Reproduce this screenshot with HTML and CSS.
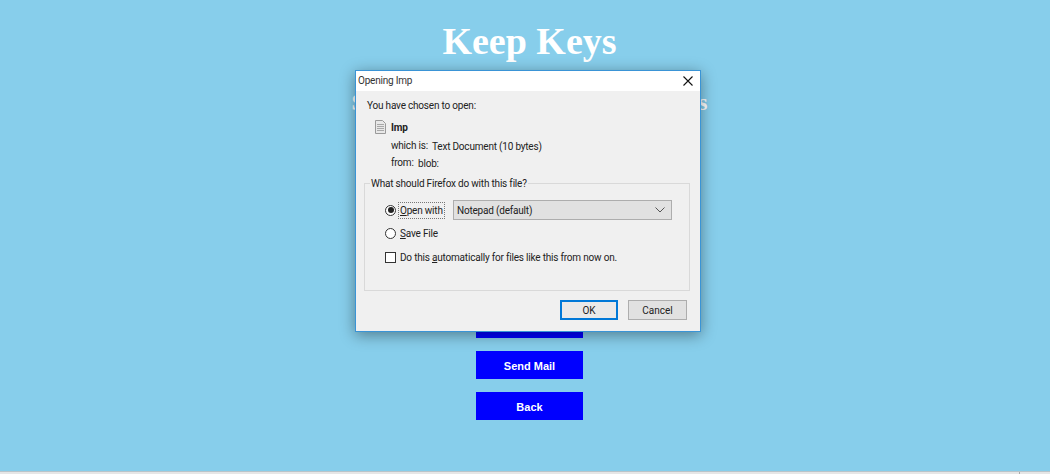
FILE: index.html
```html
<!DOCTYPE html>
<html lang="en">
<head>
    <meta charset="UTF-8">
    <title>Keep Keys</title>
    <link rel="stylesheet" href="styles.css">
</head>
<body>
    <main class="page">
        <h1>Keep Keys</h1>
        <h2>Store And Manage All Of Your Keys</h2>
        <div class="actions">
            <button class="action" type="button">Download</button>
            <button class="action" type="button">Send Mail</button>
            <button class="action" type="button">Back</button>
        </div>
    </main>
    <div class="status-bar"><span class="status-cell"></span></div>

    <section class="dialog">
        <header class="dialog-title">
            <span>Opening Imp</span>
            <svg class="close" width="10" height="10" viewBox="0 0 10 10">
                <path d="M0.5 0.5L9.5 9.5M9.5 0.5L0.5 9.5" stroke="#111" stroke-width="1.1" fill="none"/>
            </svg>
        </header>
        <div class="dialog-body">
            <p class="intro">You have chosen to open:</p>
            <div class="file-row">
                <svg class="file-icon" width="11" height="14" viewBox="0 0 11 14">
                    <path d="M0.5 0.5H7.5L10.5 3.5V13.5H0.5Z" fill="#e8e8e8" stroke="#9a9a9a"/>
                    <path d="M2 4.5H9M2 6.5H9M2 8.5H9M2 10.5H9" stroke="#a8a8a8"/>
                </svg>
                <strong>Imp</strong>
            </div>
            <div class="meta meta-type"><span class="meta-key">which is:</span><span class="meta-value">Text Document (10 bytes)</span></div>
            <div class="meta meta-from"><span class="meta-key">from:</span><span class="meta-value">blob:</span></div>

            <div class="group">
                <span class="legend">What should Firefox do with this file?</span>
                <div class="open-row">
                    <span class="radio checked"></span>
                    <span class="focus-label"><u>O</u>pen with</span>
                    <div class="select">
                        <span>Notepad (default)</span>
                        <svg width="10" height="6" viewBox="0 0 10 6">
                            <path d="M0.5 0.5L5 5L9.5 0.5" stroke="#555" fill="none"/>
                        </svg>
                    </div>
                </div>
                <div class="option-row">
                    <span class="radio"></span>
                    <span><u>S</u>ave File</span>
                </div>
                <div class="option-row auto-row">
                    <span class="checkbox"></span>
                    <span>Do this <u>a</u>utomatically for files like this from now on.</span>
                </div>
            </div>

            <div class="dialog-buttons">
                <button class="dlg-btn primary" type="button">OK</button>
                <button class="dlg-btn" type="button">Cancel</button>
            </div>
        </div>
    </section>
</body>
</html>
```

FILE: styles.css
```css
html, body {
    height: 100%;
}
body {
    margin: 0;
    background: #87ceeb;
    display: flex;
    flex-direction: column;
    overflow: hidden;
    font-family: "Roboto", "Lato", sans-serif;
}
.page {
    flex: 1;
    text-align: center;
    font-family: "Liberation Serif", serif;
    color: #fff;
    margin-right: -9px;
}
h1 {
    margin: 19px 0 0 0;
    font-size: 38px;
    line-height: 44px;
    font-weight: bold;
}
h2 {
    margin: 26px 0 0 0;
    font-size: 23px;
    line-height: 28px;
    font-weight: bold;
    white-space: nowrap;
}
.actions {
    display: flex;
    flex-direction: column;
    align-items: center;
    gap: 13px;
    margin-top: 193px;
}
.action {
    width: 107px;
    height: 28px;
    padding: 1px 0 0 0;
    border: 0;
    background: #0000ff;
    color: #fff;
    font-family: "Liberation Sans", sans-serif;
    font-size: 11px;
    font-weight: bold;
}
.status-bar {
    height: 2px;
    background: #e6e6e6;
    border-top: 1px solid #b9c4c9;
    display: flex;
    justify-content: flex-end;
}
.status-cell {
    width: 30px;
    border-left: 1px solid #aaa;
}

/* file dialog sits over the page */
.dialog {
    position: absolute;
    left: 355px;
    top: 70px;
    width: 346px;
    height: 262px;
    box-sizing: border-box;
    border: 1px solid #3a94d6;
    background: #f0f0f0;
    box-shadow: 0 3px 14px rgba(0, 0, 0, 0.4);
    display: flex;
    flex-direction: column;
    font-size: 10px;
    letter-spacing: -0.2px;
    color: #222;
}
.dialog-title {
    height: 20px;
    flex: none;
    box-sizing: border-box;
    background: #fff;
    display: flex;
    align-items: center;
    justify-content: space-between;
    padding: 0 7px 1px 2px;
    color: #333;
}
.dialog-body {
    flex: 1;
    padding: 8px 10px 0 10px;
    display: flex;
    flex-direction: column;
}
.intro {
    margin: 0 0 0 1px;
    line-height: 14px;
}
.file-row {
    display: flex;
    align-items: center;
    gap: 5px;
    margin: 7px 0 0 9px;
    height: 14px;
}
.file-row strong {
    font-weight: bold;
}
.meta {
    display: flex;
    margin-left: 25px;
    line-height: 14px;
    white-space: nowrap;
}
.meta-type {
    margin-top: 5px;
}
.meta-type .meta-key {
    width: 41px;
}
.meta-from {
    margin-top: 2px;
}
.meta-from .meta-key {
    width: 27px;
}
.meta-value {
    padding-top: 1px;
}
.group {
    position: relative;
    height: 108px;
    box-sizing: border-box;
    margin: 12px 0 0 -2px;
    border: 1px solid #d9d9d9;
    padding: 16px 16px 0 20px;
}
.legend {
    position: absolute;
    left: 5px;
    top: -7px;
    padding: 0 1px;
    line-height: 14px;
    background: #f0f0f0;
}
.open-row {
    display: flex;
    align-items: center;
    height: 20px;
}
.option-row {
    display: flex;
    align-items: center;
    gap: 4px;
    margin-top: 6px;
    height: 14px;
}
.auto-row {
    margin-top: 10px;
}
.radio {
    width: 9px;
    height: 9px;
    flex: none;
    border: 1px solid #333;
    border-radius: 50%;
    background: #fff;
    display: flex;
    align-items: center;
    justify-content: center;
}
.radio.checked::after {
    content: "";
    width: 6px;
    height: 6px;
    border-radius: 50%;
    background: #222;
}
.checkbox {
    width: 9px;
    height: 9px;
    flex: none;
    border: 1px solid #333;
    background: #fff;
}
.focus-label {
    margin-left: 2px;
    width: 47px;
    box-sizing: border-box;
    padding-left: 1px;
    white-space: nowrap;
    line-height: 15px;
    border: 1px dotted #777;
}
.select {
    margin-left: 8px;
    width: 219px;
    height: 20px;
    box-sizing: border-box;
    border: 1px solid #adadad;
    background: #e1e1e1;
    display: flex;
    align-items: center;
    justify-content: space-between;
    padding: 0 6px 0 3px;
}
.dialog-buttons {
    display: flex;
    justify-content: flex-end;
    gap: 10px;
    margin-top: 9px;
    padding-right: 3px;
}
.dlg-btn {
    width: 59px;
    height: 20px;
    padding: 0;
    border: 1px solid #adadad;
    background: #e1e1e1;
    color: #222;
    font-family: inherit;
    font-size: 10px;
}
.dlg-btn.primary {
    width: 58px;
    border: 2px solid #0078d7;
    background: #e9e9e9;
}
```
